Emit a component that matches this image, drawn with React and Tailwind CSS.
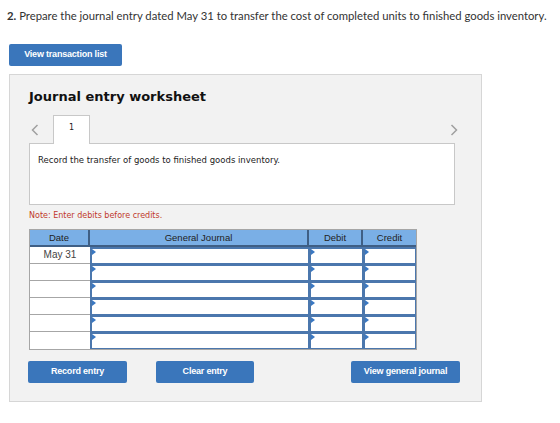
const rows = ["May 31", "", "", "", "", ""];

// little blue flag in the top-left corner of each editable cell
function Marker() {
  return (
    <span className="absolute left-0 top-0 w-0 h-0 border-t-[3px] border-b-[3px] border-l-[4px] border-t-transparent border-b-transparent border-l-[#3a78c2]" />
  );
}

function InputCell() {
  return (
    <div className="relative h-[17px] bg-white border border-[#4b77ad] border-t-2 border-l-2">
      <Marker />
    </div>
  );
}

function Chevron({ dir }) {
  return (
    <svg width="8" height="12" viewBox="0 0 8 12" className="shrink-0">
      <path
        d={dir === "left" ? "M6.5 1 L1.5 6 L6.5 11" : "M1.5 1 L6.5 6 L1.5 11"}
        fill="none"
        stroke="#a0a0a0"
        strokeWidth="1.5"
      />
    </svg>
  );
}

function BlueButton({ children, className = "" }) {
  return (
    <button
      className={
        "h-[22px] rounded-[2px] bg-[#3a76bb] text-white text-[9px] font-bold tracking-[-0.2px] font-['Liberation_Sans',Arial,sans-serif] " +
        className
      }
    >
      {children}
    </button>
  );
}

export default function App() {
  return (
    <div className="w-[560px] h-[423px] bg-white pt-[9px] pl-[7px]">
      <p className="whitespace-nowrap text-[11.3px] text-[#333] leading-[14px] font-['Lato','Open_Sans',sans-serif]">
        <span className="font-bold">2.</span> Prepare the journal entry dated May 31 to transfer the cost of completed units to finished goods inventory.
      </p>

      <BlueButton className="mt-[21px] ml-[2px] w-[113px]">View transaction list</BlueButton>

      <div className="mt-[8px] ml-[2px] w-[473px] h-[328px] bg-[#f2f2f2] border border-[#d6d6d6] pl-[19px] pr-[27px] font-['DejaVu_Sans',Verdana,sans-serif]">
        <h2 className="mt-[14px] text-[13px] font-bold text-[#111] leading-[16px]">Journal entry worksheet</h2>

        <div className="mt-[9px] flex items-end h-[29px]">
          <div className="w-[24px] pl-[2px] mb-[7px]">
            <Chevron dir="left" />
          </div>
          <div className="w-[37px] h-[29px] bg-white border border-[#c8c8c8] border-b-0 -mb-px relative z-10 text-[8px] text-[#222] text-center pt-[6px]">
            1
          </div>
          <div className="ml-auto -mr-[4px] mb-[7px]">
            <Chevron dir="right" />
          </div>
        </div>

        <div className="w-[426px] h-[62px] bg-white border border-[#c8c8c8] px-[8px] pt-[10px] text-[8.5px] text-[#222]">
          Record the transfer of goods to finished goods inventory.
        </div>

        <p className="mt-[5px] text-[8px] text-[#c0392b]">Note: Enter debits before credits.</p>

        <div className="mt-[7px] w-[388px] border border-[#a6a6a6] font-['Liberation_Sans',Arial,sans-serif] text-[9.5px]">
          <div className="grid grid-cols-[60px_219px_54px_53px] h-[17px] bg-[#7aafe6] text-[#222] border-b-2 border-[#3f5f85] leading-[15px] text-center">
            <div className="border-r-2 border-[#3f5f85]">Date</div>
            <div className="border-r-2 border-[#3f5f85]">General Journal</div>
            <div className="border-r-2 border-[#3f5f85]">Debit</div>
            <div>Credit</div>
          </div>
          {rows.map((date, i) => (
            <div key={i} className="grid grid-cols-[60px_219px_54px_53px]">
              <div
                className={
                  "h-[17px] bg-white text-center text-[10px] text-[#444] leading-[16px] border-[#a6a6a6] " +
                  (i < rows.length - 1 ? "border-b" : "")
                }
              >
                {date}
              </div>
              <InputCell />
              <InputCell />
              <InputCell />
            </div>
          ))}
        </div>

        <div className="mt-[11px] flex">
          <BlueButton className="w-[99px] -ml-[1px]">Record entry</BlueButton>
          <BlueButton className="w-[98px] ml-[29px]">Clear entry</BlueButton>
          <BlueButton className="w-[109px] ml-auto mr-[-6px]">View general journal</BlueButton>
        </div>
      </div>
    </div>
  );
}
